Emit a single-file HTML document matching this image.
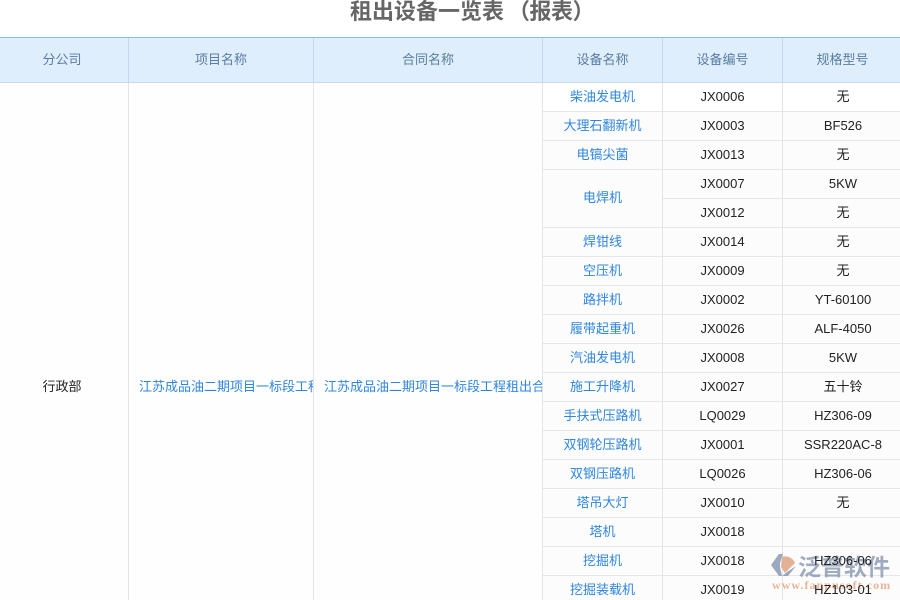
<!DOCTYPE html>
<html lang="zh">
<head>
<meta charset="utf-8">
<style>
html,body{margin:0;padding:0;width:900px;height:600px;overflow:hidden;background:#fff}
body{position:relative;font-family:"Liberation Sans","Noto Sans CJK SC",sans-serif;font-size:13px;color:#222}
.a{position:absolute;z-index:1}
.t{position:absolute;left:350px;top:-2px;height:28px;line-height:28px;font-size:22px;font-weight:bold;color:#666;white-space:nowrap}
.hd{position:absolute;left:0;top:37px;width:900px;background:#deeefd;border-top:1px solid #8fbce6;border-bottom:1px solid #c4dbf1;box-sizing:content-box;height:44px}
.hc{position:absolute;top:38px;height:44px;line-height:43px;text-align:center;color:#5a7d9f;font-size:13px}
.vh{position:absolute;top:38px;height:45px;width:1px;background:#c4d9ee}
.v{position:absolute;top:83px;height:517px;width:1px;background:#e4e4e4}
.h{position:absolute;height:1px;background:#e6e6e6}
.bg{position:absolute;background:#fcfcfc}
.c{position:absolute;z-index:2;height:29px;line-height:30px;text-align:center;white-space:nowrap;overflow:hidden}
.l{color:#2f86e0}
</style>
</head>
<body>
<div class="t">租出设备一览表<span style="margin-left:4px;letter-spacing:-.5px">（报表）</span></div>
<div class="hd"></div>
<div class="hc" style="left:0;width:124px">分公司</div>
<div class="hc" style="left:129px;width:184px">项目名称</div>
<div class="hc" style="left:314px;width:228px">合同名称</div>
<div class="hc" style="left:543px;width:119px">设备名称</div>
<div class="hc" style="left:663px;width:119px">设备编号</div>
<div class="hc" style="left:783px;width:119px">规格型号</div>
<div class="vh" style="left:128px"></div><div class="vh" style="left:313px"></div><div class="vh" style="left:542px"></div><div class="vh" style="left:662px"></div><div class="vh" style="left:782px"></div>

<div class="bg" style="left:543px;top:112px;width:357px;height:488px"></div>
<div class="bg" style="left:0;top:83px;width:128px;height:517px;background:#fefefe"></div>
<div class="bg" style="left:129px;top:83px;width:413px;height:517px;background:#fefefe"></div>

<div class="h" style="left:543px;width:357px;top:111px"></div>
<div class="h" style="left:543px;width:357px;top:140px"></div>
<div class="h" style="left:543px;width:357px;top:169px"></div>
<div class="h" style="left:663px;width:237px;top:198px"></div>
<div class="h" style="left:543px;width:357px;top:227px"></div>
<div class="h" style="left:543px;width:357px;top:256px"></div>
<div class="h" style="left:543px;width:357px;top:285px"></div>
<div class="h" style="left:543px;width:357px;top:314px"></div>
<div class="h" style="left:543px;width:357px;top:343px"></div>
<div class="h" style="left:543px;width:357px;top:372px"></div>
<div class="h" style="left:543px;width:357px;top:401px"></div>
<div class="h" style="left:543px;width:357px;top:430px"></div>
<div class="h" style="left:543px;width:357px;top:459px"></div>
<div class="h" style="left:543px;width:357px;top:488px"></div>
<div class="h" style="left:543px;width:357px;top:517px"></div>
<div class="h" style="left:543px;width:357px;top:546px"></div>
<div class="h" style="left:543px;width:357px;top:575px"></div>
<div class="v" style="left:128px"></div><div class="v" style="left:313px"></div><div class="v" style="left:542px"></div><div class="v" style="left:662px"></div><div class="v" style="left:782px"></div>

<svg class="a" style="left:770px;top:553px;opacity:.85" width="28" height="26" viewBox="0 0 28 26">
<path d="M1 12 L9 1 L13 1 L10 10 L10 14 L12 23 L9 23 Z" fill="#8a9bb5"/>
<path d="M12 4 C17 2 23 5 25 10 L15 20 L11 14 Z" fill="#e2a583"/>
<path d="M26 13 L18 23 L12 23 L17 19 Z" fill="#8a9bb5"/>
</svg>
<div class="a" style="left:798px;top:553px;font-size:23px;line-height:28px;font-weight:bold;color:rgba(120,138,165,.7);white-space:nowrap">泛普软件</div>
<div class="a" style="left:772px;top:578px;font-size:12px;line-height:14px;font-family:'Liberation Serif',serif;font-weight:bold;letter-spacing:1.05px;color:rgba(226,150,110,.7);white-space:nowrap">www.fanpusoft.com</div>

<div class="c" style="left:0;width:124px;top:372px">行政部</div>
<div class="c l" style="left:139px;width:174px;top:372px;text-align:left">江苏成品油二期项目一标段工程租出合同</div>
<div class="c l" style="left:324px;width:218px;top:372px;text-align:left">江苏成品油二期项目一标段工程租出合同</div>

<div class="c l" style="left:543px;width:119px;top:82px">柴油发电机</div><div class="c" style="left:663px;width:119px;top:82px">JX0006</div><div class="c" style="left:783px;width:120px;top:82px">无</div>
<div class="c l" style="left:543px;width:119px;top:111px">大理石翻新机</div><div class="c" style="left:663px;width:119px;top:111px">JX0003</div><div class="c" style="left:783px;width:120px;top:111px">BF526</div>
<div class="c l" style="left:543px;width:119px;top:140px">电镐尖菌</div><div class="c" style="left:663px;width:119px;top:140px">JX0013</div><div class="c" style="left:783px;width:120px;top:140px">无</div>
<div class="c l" style="left:543px;width:119px;top:183px">电焊机</div><div class="c" style="left:663px;width:119px;top:169px">JX0007</div><div class="c" style="left:783px;width:120px;top:169px">5KW</div>
<div class="c" style="left:663px;width:119px;top:198px">JX0012</div><div class="c" style="left:783px;width:120px;top:198px">无</div>
<div class="c l" style="left:543px;width:119px;top:227px">焊钳线</div><div class="c" style="left:663px;width:119px;top:227px">JX0014</div><div class="c" style="left:783px;width:120px;top:227px">无</div>
<div class="c l" style="left:543px;width:119px;top:256px">空压机</div><div class="c" style="left:663px;width:119px;top:256px">JX0009</div><div class="c" style="left:783px;width:120px;top:256px">无</div>
<div class="c l" style="left:543px;width:119px;top:285px">路拌机</div><div class="c" style="left:663px;width:119px;top:285px">JX0002</div><div class="c" style="left:783px;width:120px;top:285px">YT-60100</div>
<div class="c l" style="left:543px;width:119px;top:314px">履带起重机</div><div class="c" style="left:663px;width:119px;top:314px">JX0026</div><div class="c" style="left:783px;width:120px;top:314px">ALF-4050</div>
<div class="c l" style="left:543px;width:119px;top:343px">汽油发电机</div><div class="c" style="left:663px;width:119px;top:343px">JX0008</div><div class="c" style="left:783px;width:120px;top:343px">5KW</div>
<div class="c l" style="left:543px;width:119px;top:372px">施工升降机</div><div class="c" style="left:663px;width:119px;top:372px">JX0027</div><div class="c" style="left:783px;width:120px;top:372px">五十铃</div>
<div class="c l" style="left:543px;width:119px;top:401px">手扶式压路机</div><div class="c" style="left:663px;width:119px;top:401px">LQ0029</div><div class="c" style="left:783px;width:120px;top:401px">HZ306-09</div>
<div class="c l" style="left:543px;width:119px;top:430px">双钢轮压路机</div><div class="c" style="left:663px;width:119px;top:430px">JX0001</div><div class="c" style="left:783px;width:120px;top:430px">SSR220AC-8</div>
<div class="c l" style="left:543px;width:119px;top:459px">双钢压路机</div><div class="c" style="left:663px;width:119px;top:459px">LQ0026</div><div class="c" style="left:783px;width:120px;top:459px">HZ306-06</div>
<div class="c l" style="left:543px;width:119px;top:488px">塔吊大灯</div><div class="c" style="left:663px;width:119px;top:488px">JX0010</div><div class="c" style="left:783px;width:120px;top:488px">无</div>
<div class="c l" style="left:543px;width:119px;top:517px">塔机</div><div class="c" style="left:663px;width:119px;top:517px">JX0018</div>
<div class="c l" style="left:543px;width:119px;top:546px">挖掘机</div><div class="c" style="left:663px;width:119px;top:546px">JX0018</div><div class="c" style="left:783px;width:120px;top:546px">HZ306-06</div>
<div class="c l" style="left:543px;width:119px;top:575px">挖掘装载机</div><div class="c" style="left:663px;width:119px;top:575px">JX0019</div><div class="c" style="left:783px;width:120px;top:575px">HZ103-01</div>
</body>
</html>
